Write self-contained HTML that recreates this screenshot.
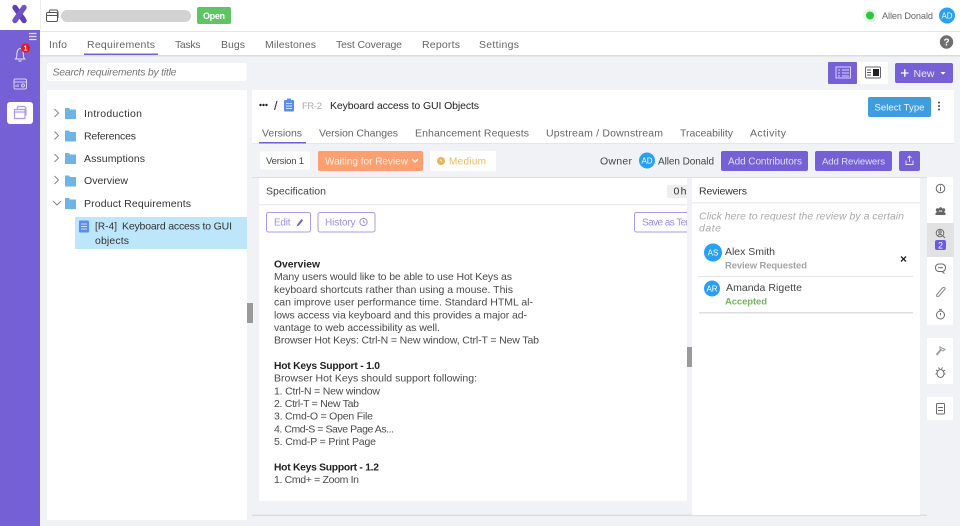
<!DOCTYPE html>
<html><head><meta charset="utf-8"><title>Requirements</title>
<style>
html,body{margin:0;padding:0;width:960px;height:526px;overflow:hidden;background:#f1f2f5}
svg{display:block;filter:blur(.35px)}
text{font-family:"Liberation Sans",sans-serif;font-size:10.5px;fill:#444}
.d{fill:#222}.m{fill:#666}.w{fill:#fff}.b{font-weight:700}.i{font-style:italic}
.body{fill:#4a4a4a;font-size:10.5px}
.hd{fill:#222;font-weight:700;font-size:10.3px}
.ic{fill:none;stroke:#6a6a6a;stroke-width:1}
</style></head><body>
<svg width="960" height="526" viewBox="0 0 960 526" xmlns="http://www.w3.org/2000/svg">
<rect width="960" height="526" fill="#f1f2f5"/>
<!-- top bar -->
<rect width="960" height="31" fill="#fff"/>
<rect y="31" width="960" height="1" fill="#e6e6e6"/>
<rect x="40" y="0" width="1" height="30" fill="#eee"/>
<rect x="40" y="32" width="920" height="23" fill="#fff"/>
<rect x="40" y="55" width="920" height="1.5" fill="#dcdcdf"/>
<!-- sidebar -->
<rect y="30" width="40" height="496" fill="#7561d5"/>
<path d="M15 7.500L24 20.500" stroke="#5f3fb5" stroke-width="5.400" stroke-linecap="round"/>
<path d="M24 7.500L15 20.500" stroke="#7052c8" stroke-width="5.400" stroke-linecap="round"/>
<path d="M29 33.500h7.500M29 36.500h7.500M29 39.500h7.500" stroke="#e4e0f8" stroke-width="1.300"/>
<path d="M15.500 59c2-2 1-4 1.600-7 .5-2.300 2-3.500 3-3.500s2.500 1.200 3 3.500c.6 3-.4 5 1.600 7z" fill="none" stroke="#e6e2f8" stroke-width="1"/>
<path d="M18.500 60.500a2 2 0 0 0 3 0" fill="none" stroke="#e6e2f8"/>
<circle cx="25.500" cy="48" r="4.600" fill="#f0141e"/>
<text x="25.500" y="50.700" text-anchor="middle" class="w b" style="font-size:7px">1</text>
<rect x="14" y="79" width="12.500" height="10" rx="1.500" fill="none" stroke="#d8d3f4"/>
<path d="M14 82h12.500M16 87v-2M18 87v-3M22 87v-2" stroke="#d8d3f4" fill="none"/>
<circle cx="23" cy="85.500" r="1.500" fill="none" stroke="#d8d3f4"/>
<rect x="7" y="102" width="26" height="22" rx="3" fill="#fff"/>
<path d="M14.500 109.500v9h10.500v-9z" fill="none" stroke="#a99cec" stroke-width="1.200"/>
<path d="M14.500 112h10.500M17 109l1-2.500h6.500l1.500 2v7" fill="none" stroke="#a99cec" stroke-width="1.200"/>
<!-- header left -->
<rect x="46.500" y="12.500" width="11" height="9" rx="1.500" fill="none" stroke="#555"/>
<path d="M47 15.500h10.500M49 12l1-2h7l1 2v6" fill="none" stroke="#555"/>
<rect x="61" y="10" width="130" height="12" rx="6" fill="#d2d2d2"/>
<rect x="197" y="7" width="34" height="17" rx="2" fill="#5fc463"/>
<text x="203" y="18.800" textLength="22" class="w b" style="font-size:9px">Open</text>
<!-- header right -->
<circle cx="870" cy="15.500" r="7" fill="#2fcc3f" opacity=".12"/>
<circle cx="870" cy="15.500" r="4" fill="#2dc840"/>
<text x="882" y="18.800" textLength="51" class="m" style="font-size:9.200px">Allen Donald</text>
<circle cx="947" cy="15.500" r="8" fill="#27a0f5"/>
<text x="947" y="18.500" text-anchor="middle" class="w" style="font-size:8px">AD</text>
<!-- tabs -->
<text x="49" y="48" textLength="18" class="m">Info</text>
<text x="87" y="48" textLength="68" class="m">Requirements</text>
<rect x="84" y="53.500" width="74" height="1.500" fill="#7561d5"/>
<text x="175" y="48" textLength="25.500" class="m">Tasks</text>
<text x="221" y="48" textLength="24" class="m">Bugs</text>
<text x="265" y="48" textLength="51" class="m">Milestones</text>
<text x="336" y="48" textLength="66" class="m">Test Coverage</text>
<text x="422" y="48" textLength="38" class="m">Reports</text>
<text x="479" y="48" textLength="40" class="m">Settings</text>
<circle cx="946.500" cy="42" r="6.700" fill="#6f6f6f"/>
<text x="946.500" y="45.700" text-anchor="middle" class="w b" style="font-size:10px">?</text>
<!-- search -->
<rect x="47" y="63" width="199.500" height="18" rx="1.500" fill="#fff"/>
<text x="52.500" y="75.500" textLength="124" class="i" style="fill:#777">Search requirements by title</text>
<!-- view toggle / new -->
<rect x="857" y="62" width="31" height="22" fill="#fff"/>
<rect x="828" y="62" width="29" height="22" rx="1" fill="#7561d5"/>
<rect x="836" y="67" width="14.500" height="11" fill="none" stroke="#d9d4f6"/>
<path d="M838 70h2M842 70h7M838 73h2M842 73h7M838 76h2M842 76h7" stroke="#d9d4f6"/>
<rect x="865.500" y="67" width="15" height="11" rx="1" fill="#fff" stroke="#666"/>
<path d="M867 70h4M867 72.500h4M867 75h4" stroke="#555"/>
<rect x="873" y="69" width="6" height="7" fill="#222"/>
<rect x="895" y="63" width="58" height="20" rx="2" fill="#7561d5"/>
<path d="M901 73h7.500M904.800 69.300v7.500" stroke="#fff" stroke-width="1.300"/>
<text x="913.500" y="77" textLength="21" style="font-size:10.500px;fill:#e9e6fa">New</text>
<path d="M940.500 72h5l-2.500 2.700z" fill="#fff"/>
<!-- tree panel -->
<rect x="47" y="90" width="200" height="430" fill="#fff"/>
<g fill="none" stroke="#888" stroke-width="1">
<path d="M54.500 109l4 4-4 4M54.500 131.500l4 4-4 4M54.500 154l4 4-4 4M54.500 176l4 4-4 4"/>
<path d="M53 201l4 4 4-4"/>
</g>
<g fill="#6eb4e4">
<path d="M65 108h4l1 1.500h6V119H65z"/>
<path d="M65 130.500h4l1 1.500h6v9.500H65z"/>
<path d="M65 153h4l1 1.500h6v9.500H65z"/>
<path d="M65 175.500h4l1 1.500h6v9.500H65z"/>
<path d="M65 198h4l1 1.500h6v9.500H65z"/>
</g>
<text x="84" y="116.800" textLength="58" style="fill:#333">Introduction</text>
<text x="84" y="139.300" textLength="52" style="fill:#333">References</text>
<text x="84" y="161.800" textLength="61" style="fill:#333">Assumptions</text>
<text x="84" y="184" textLength="44" style="fill:#333">Overview</text>
<text x="84" y="206.800" textLength="107" style="fill:#333">Product Requirements</text>
<rect x="75" y="217" width="172" height="32" fill="#bde6fb"/>
<rect x="79" y="220.500" width="10" height="12" rx="1" fill="#5b8def"/>
<path d="M81 224h6M81 226.500h6M81 229h6" stroke="#cfe0fb" stroke-width=".9"/>
<text x="95" y="229.500" textLength="22" style="fill:#333;font-size:10px">[R-4]</text>
<text x="122" y="229.500" textLength="110" style="fill:#333">Keyboard access to GUI</text>
<text x="95" y="244" textLength="34" style="fill:#333">objects</text>
<rect x="247" y="303" width="6" height="20" fill="#9a9a9a"/>
<!-- main header -->
<rect x="252" y="90" width="702" height="53" fill="#fff"/>
<rect x="252" y="143" width="702" height="1" fill="#e6e6e8"/>
<circle cx="260.500" cy="105" r="1.200" fill="#222"/><circle cx="263.500" cy="105" r="1.200" fill="#222"/><circle cx="266.500" cy="105" r="1.200" fill="#222"/>
<path d="M274.500 110l2.500-9" stroke="#333" stroke-width="1.100"/>
<rect x="284" y="100" width="10" height="11.500" rx="1" fill="#5b8def"/>
<rect x="287" y="98.500" width="4" height="2.500" fill="#5b8def"/>
<path d="M286 103.500h6M286 106h6M286 108.500h6" stroke="#cfe0fb" stroke-width=".9"/>
<text x="302" y="109" textLength="20" style="fill:#aaa;font-size:9.500px">FR-2</text>
<text x="330" y="109" textLength="149" style="fill:#222;font-size:10.500px">Keyboard access to GUI Objects</text>
<rect x="868" y="97" width="63" height="20" rx="2" fill="#3f9ddd"/>
<text x="874.500" y="110.500" textLength="50" style="font-size:9.600px;fill:#eaf5fc">Select Type</text>
<circle cx="939" cy="102.500" r="1" fill="#444"/><circle cx="939" cy="106" r="1" fill="#444"/><circle cx="939" cy="109.500" r="1" fill="#444"/>
<text x="262" y="136.500" textLength="40" class="m">Versions</text>
<rect x="259" y="142" width="47" height="1.500" fill="#7561d5"/>
<text x="319" y="136.500" textLength="79" class="m">Version Changes</text>
<text x="415" y="136.500" textLength="114" class="m">Enhancement Requests</text>
<text x="546" y="136.500" textLength="117" class="m">Upstream / Downstream</text>
<text x="680" y="136.500" textLength="53" class="m">Traceability</text>
<text x="750" y="136.500" textLength="36" class="m">Activity</text>
<!-- version row -->
<rect x="260" y="151.500" width="50" height="18" rx="1" fill="#fff"/>
<text x="266" y="164" textLength="38" style="fill:#444;font-size:9.500px">Version 1</text>
<rect x="318" y="151" width="105" height="20" rx="2" fill="#fd9f6e"/>
<text x="325" y="164.500" textLength="83" style="font-size:10px;fill:#fff2ea">Waiting for Review</text>
<path d="M412 159l3 3 3-3" fill="none" stroke="#fff" stroke-width="1.400"/>
<rect x="430" y="151" width="66" height="20" rx="1" fill="#fff"/>
<circle cx="441" cy="161" r="4" fill="#efb255"/>
<path d="M440 159.500l2 2" stroke="#fff"/>
<text x="449" y="164.500" textLength="37" style="fill:#efb860;font-size:10px">Medium</text>
<text x="600" y="164.500" textLength="32" style="fill:#444">Owner</text>
<circle cx="647" cy="160.500" r="8" fill="#27a0f5"/>
<text x="647" y="163.500" text-anchor="middle" class="w" style="font-size:8px">AD</text>
<text x="658" y="164.500" textLength="56" style="fill:#444;font-size:10px">Allen Donald</text>
<rect x="721" y="151" width="87" height="20" rx="2" fill="#7561d5"/>
<text x="728" y="164.500" textLength="74" style="fill:#e0dcf8;font-size:10px">Add Contributors</text>
<rect x="815" y="151" width="77" height="20" rx="2" fill="#7561d5"/>
<text x="822" y="164.500" textLength="63" style="fill:#e0dcf8;font-size:9.600px">Add Reviewers</text>
<rect x="899" y="151" width="21" height="20" rx="2" fill="#7561d5"/>
<path d="M906 160.500v4h7v-4M909.500 162v-6M907.500 158l2-2 2 2" fill="none" stroke="#e9e6fa" stroke-width=".9"/>
<rect x="252" y="177" width="675" height="1" fill="#dedfe2"/>
<!-- spec panel -->
<rect x="259" y="178" width="428" height="323" fill="#fff"/>
<rect x="259" y="204" width="428" height="1.500" fill="#ededf0"/>
<text x="266" y="194.500" textLength="60" style="fill:#444">Specification</text>
<rect x="667" y="185" width="21" height="13" fill="#eeeeee"/>
<text x="673.500" y="194.500" textLength="13" style="fill:#333">0 h</text>
<rect x="266.500" y="212.500" width="44" height="19.500" rx="2" fill="#fff" stroke="#a99cec"/>
<text x="274" y="225.500" textLength="16.500" style="fill:#9a8ee6;font-size:10px">Edit</text>
<path d="M296.500 226.500l1-2.500 4-5 1.600 1.400-4 5z" fill="#7561d5"/>
<rect x="318" y="212.500" width="57" height="19.500" rx="2" fill="#fff" stroke="#a99cec"/>
<text x="325" y="225.500" textLength="30.500" style="fill:#9a8ee6;font-size:10px">History</text>
<circle cx="363.500" cy="222" r="3.600" fill="none" stroke="#9a8ee6"/>
<path d="M363.500 220v2.200h1.800" fill="none" stroke="#9a8ee6" stroke-width=".8"/>
<rect x="634.500" y="212.500" width="60" height="19.500" rx="2" fill="#fff" stroke="#a99cec"/>
<text x="642" y="225.500" textLength="52" style="fill:#9a8ee6;font-size:10px">Save as Tem</text>
<!-- body copy -->
<text x="274" y="267.500" textLength="46" class="hd">Overview</text>
<text x="274" y="280.200" textLength="238" class="body">Many users would like to be able to use Hot Keys as</text>
<text x="274" y="292.900" textLength="239" class="body">keyboard shortcuts rather than using a mouse. This</text>
<text x="274" y="305.600" textLength="259" class="body">can improve user performance time. Standard HTML al-</text>
<text x="274" y="318.300" textLength="253" class="body">lows access via keyboard and this provides a major ad-</text>
<text x="274" y="331" textLength="166" class="body">vantage to web accessibility as well.</text>
<text x="274" y="343.700" textLength="265" class="body">Browser Hot Keys: Ctrl-N = New window, Ctrl-T = New Tab</text>
<text x="274" y="369" textLength="106" class="hd">Hot Keys Support - 1.0</text>
<text x="274" y="381.700" textLength="203" class="body">Browser Hot Keys should support following:</text>
<text x="274" y="394.400" textLength="106" class="body">1. Ctrl-N = New window</text>
<text x="274" y="407" textLength="85" class="body">2. Ctrl-T = New Tab</text>
<text x="274" y="419.700" textLength="99" class="body">3. Cmd-O = Open File</text>
<text x="274" y="432.400" textLength="120" class="body">4. Cmd-S = Save Page As...</text>
<text x="274" y="445" textLength="102" class="body">5. Cmd-P = Print Page</text>
<text x="274" y="470.500" textLength="105" class="hd">Hot Keys Support - 1.2</text>
<text x="274" y="483.200" textLength="85" class="body">1. Cmd+ = Zoom In</text>
<rect x="687" y="178" width="5" height="337" fill="#f1f2f5"/>
<rect x="687" y="347" width="6" height="20" fill="#9a9a9a"/>
<rect x="252" y="514.500" width="675" height="1.500" fill="#dcdde0"/>
<!-- reviewers panel -->
<rect x="692" y="178" width="228" height="337" fill="#fff"/>
<rect x="692" y="202" width="228" height="1.500" fill="#ededf0"/>
<text x="699" y="194.500" textLength="48" style="fill:#333">Reviewers</text>
<text x="699" y="219.500" textLength="205" class="i" style="fill:#aaa">Click here to request the review by a certain</text>
<text x="699" y="231.500" textLength="22" class="i" style="fill:#aaa">date</text>
<circle cx="713" cy="252.500" r="9" fill="#27a0f5"/>
<text x="713" y="255.500" text-anchor="middle" class="w" style="font-size:8px">AS</text>
<text x="725" y="254.800" textLength="50" style="fill:#444">Alex Smith</text>
<text x="725" y="268.500" textLength="82" class="b" style="fill:#a3a3a3;font-size:9.500px">Review Requested</text>
<path d="M901 256.500l5 5M906 256.500l-5 5" stroke="#222" stroke-width="1.300"/>
<rect x="698" y="276" width="215" height="1" fill="#e4e4e4"/>
<circle cx="712" cy="288.500" r="8" fill="#27a0f5"/>
<text x="712" y="291.500" text-anchor="middle" class="w" style="font-size:8px">AR</text>
<text x="726" y="291" textLength="76" style="fill:#444">Amanda Rigette</text>
<text x="725" y="304.500" textLength="42" class="b" style="fill:#72b55c;font-size:9.500px">Accepted</text>
<rect x="699" y="312" width="214" height="1.500" fill="#dedede"/>
<!-- right rail -->
<rect x="927" y="177" width="26" height="46" fill="#fff"/>
<rect x="927" y="223" width="27" height="34" fill="#e2e2e2"/>
<rect x="927" y="257" width="26" height="68" fill="#fff"/>
<rect x="927" y="338" width="26" height="46" fill="#fff"/>
<rect x="927" y="397" width="26" height="23" fill="#fff"/>
<g class="ic">
<circle cx="940.500" cy="188.500" r="4.300"/>
<path d="M940.500 187v4M940.500 185.500v.8"/>
<circle cx="937.500" cy="210" r="1.700" fill="#666" stroke="none"/><circle cx="943.500" cy="210" r="1.700" fill="#666" stroke="none"/><circle cx="940.500" cy="209" r="1.700" fill="#666" stroke="none"/>
<path d="M935.500 215v-2l2-1.500h6l2 1.500v2z" fill="#666" stroke="none"/>
<circle cx="940" cy="233" r="3.800"/><path d="M943 236l2 2"/><circle cx="940" cy="232" r="1.200"/><path d="M937.800 235.500c1-1.500 3.400-1.500 4.400 0"/>
<rect x="935.500" y="264" width="10" height="7.500" rx="3.500"/><path d="M942 271.500l2.500 2M938 267.700h5"/>
<path d="M936.500 295l6-7c1-1 3-.5 2.500 1l-6 7c-1 1-3.200 .5-2.500-1z" stroke="#888"/>
<circle cx="940.500" cy="315" r="4"/><path d="M940.500 313v2.200M939 309.800h3"/>
<path d="M936.500 355l4.500-5.500" stroke-width="1.800" stroke="#999"/><path d="M940 347l5 2.500-2 1.500-3-2z" stroke="#999"/>
<ellipse cx="940.500" cy="373.500" rx="3.500" ry="4"/><path d="M936 370l1.500 1M945 370l-1.500 1M935.500 374h1.500M945.500 374h-1.500M938.500 367.500l1 1.500M942.500 367.500l-1 1.500"/>
<rect x="936.500" y="403.500" width="8" height="10.500" rx="1"/><path d="M938 407.500h5M938 410.500h5"/>
</g>
<rect x="935" y="240" width="11" height="10" rx="2" fill="#6b5ae0"/>
<text x="940.500" y="248.300" text-anchor="middle" class="w" style="font-size:9px">2</text>
</svg>
</body></html>
